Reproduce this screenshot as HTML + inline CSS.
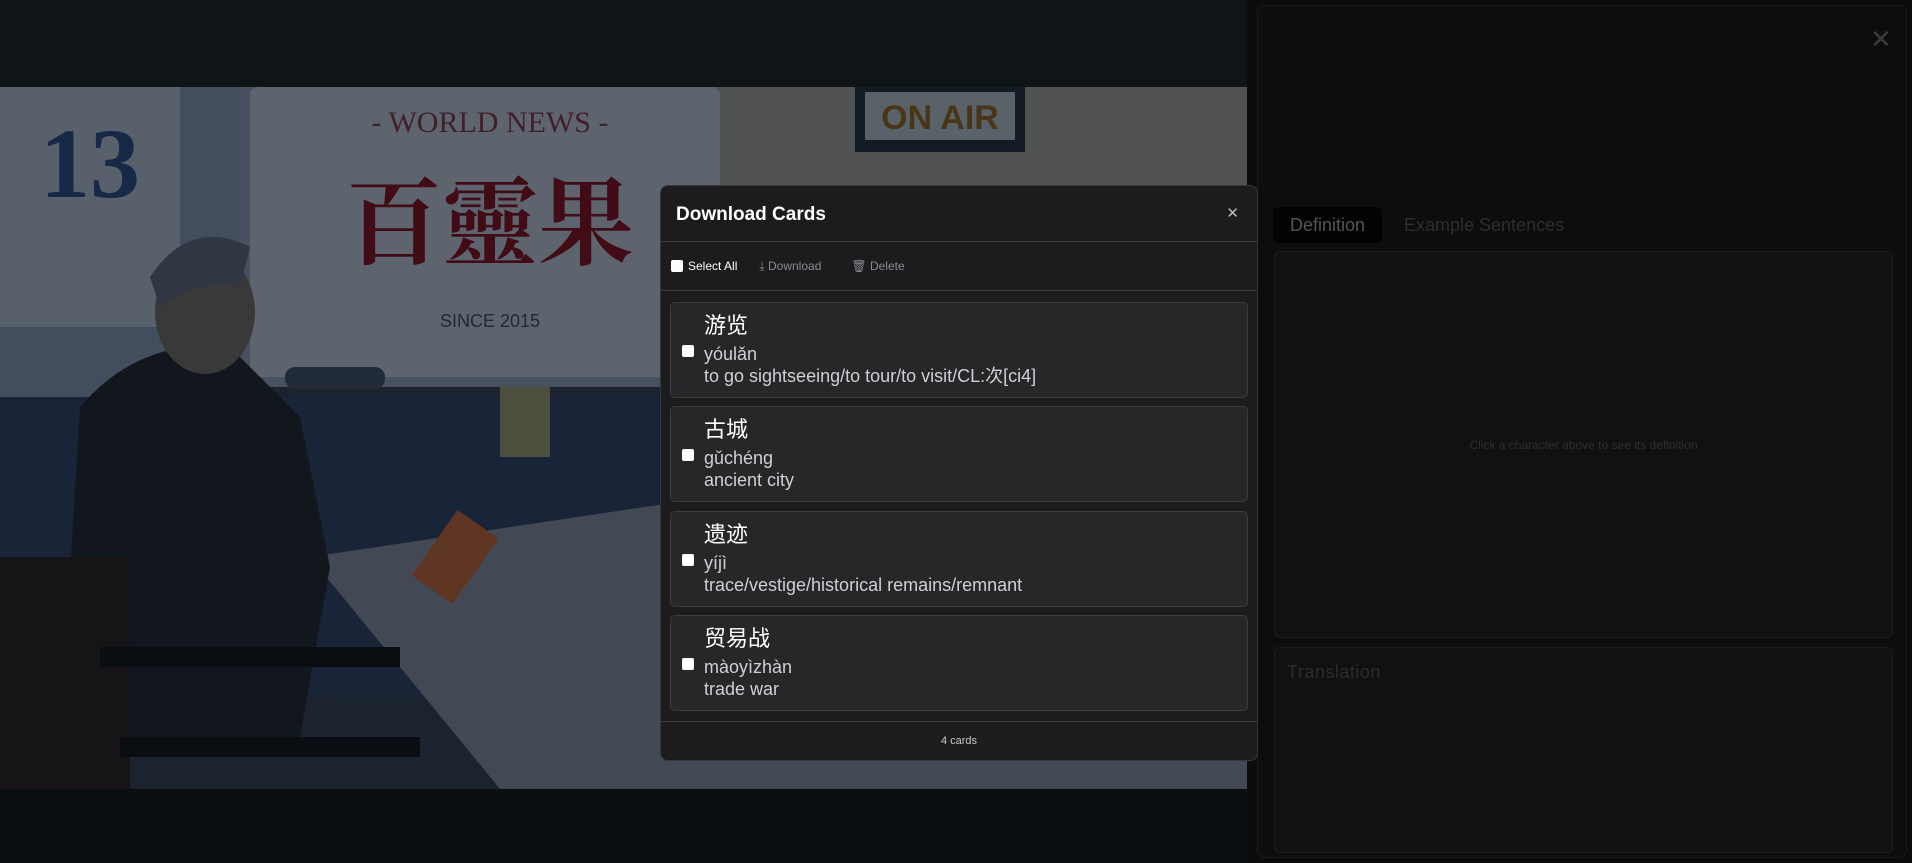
<!DOCTYPE html>
<html><head><meta charset="utf-8"><style>
*{box-sizing:border-box;margin:0;padding:0}
body{width:1912px;height:863px;background:#0b0c0d;font-family:"Liberation Sans","Noto Sans CJK SC",sans-serif;position:relative;overflow:hidden}
.top{position:absolute;left:0;top:0;width:1247px;height:87px;background:#0f1416}
.bot{position:absolute;left:0;top:789px;width:1247px;height:74px;background:#0b0f11}
.video{position:absolute;left:0;top:87px;width:1247px;height:702px;overflow:hidden}
.dim{position:absolute;left:0;top:87px;width:1247px;height:702px;background:rgba(8,12,18,.5)}
.panel{position:absolute;left:1257px;top:5px;width:650px;height:853px;background:#0d0d0e;border:1px solid #1b1b1d;border-radius:8px}
.px{position:absolute;left:1870px;top:24px;color:#3b3b3f;font-size:26px}
.tab1{position:absolute;left:1273px;top:207px;width:109px;height:36px;background:#030303;border-radius:5px;color:#55555a;font-size:18px;line-height:36px;text-align:center}
.tab2{position:absolute;left:1404px;top:207px;height:36px;line-height:36px;color:#2e2e32;font-size:18px}
.box{position:absolute;left:1274px;width:619px;background:#111112;border:1px solid #1c1c1e;border-radius:6px}
.modal{position:absolute;left:660px;top:185px;width:598px;height:576px;background:#1c1c1f;border:1px solid #37373a;border-radius:8px;color:#fff}
.hd{height:56px;border-bottom:1px solid #3a3a3d;position:relative}
.hd h2{position:absolute;left:15px;top:18px;font-size:19px;font-weight:bold}
.hd .x{position:absolute;right:18px;top:18px;font-size:15px;color:#bbb}
.tb{height:49px;border-bottom:1px solid #3a3a3d;display:flex;align-items:center;font-size:12px;padding-left:10px}
.cb{width:12px;height:12px;background:#fff;border-radius:2px;display:inline-block}
.card{position:absolute;left:9px;width:578px;height:96px;background:#27272a;border:1px solid #3c3c40;border-radius:5px}
.card .cb{position:absolute;left:11px;top:42px}
.card .t{position:absolute;left:33px;top:8px;line-height:22px}
.h{font-size:22px;line-height:30px;color:#fff;margin-bottom:2px}
.p,.d{font-size:18px;color:#d0d0d4}
.ft{position:absolute;left:0;right:0;top:535px;border-top:1px solid #3a3a3d;text-align:center;font-size:11px;color:#ccc;padding-top:13px}
</style></head><body>
<div class="top"></div>
<div class="video">
<svg width="1247" height="702" viewBox="0 0 1247 702">
<rect width="1247" height="702" fill="#2e3a4c"/>
<rect x="0" y="0" width="250" height="500" fill="#7c8fa8"/>
<rect x="240" y="0" width="1007" height="300" fill="#8796ac"/>
<rect x="720" y="0" width="527" height="330" fill="#9a9a92"/>
<rect x="250" y="0" width="470" height="290" fill="#b3bcca" rx="8"/>
<rect x="855" y="0" width="170" height="65" fill="#1e2c36"/>
<rect x="865" y="5" width="150" height="48" fill="#a9b8bf"/>
<text x="940" y="42" font-size="34" font-weight="bold" fill="#8a6020" text-anchor="middle" font-family="Liberation Sans">ON AIR</text>
<text x="490" y="45" font-size="30" fill="#7a3540" text-anchor="middle" font-family="Liberation Serif">- WORLD NEWS -</text>
<text x="490" y="170" font-size="96" font-weight="bold" fill="#7a0d18" text-anchor="middle" font-family="Noto Serif CJK SC,serif">百靈果</text>
<text x="490" y="240" font-size="18" fill="#3e4656" text-anchor="middle">SINCE 2015</text>
<rect x="0" y="0" width="180" height="240" fill="#a9b4c4"/>
<text x="90" y="110" font-size="100" font-weight="bold" fill="#24467a" text-anchor="middle" font-family="Liberation Serif">13</text>
<rect x="0" y="310" width="720" height="300" fill="#2b3d60"/>
<polygon points="310,470 1247,330 1247,702 500,702" fill="#7c8799"/>
<path d="M60 650 L80 320 Q140 250 230 260 L300 330 L330 480 L300 650 Z" fill="#1d2329"/>
<ellipse cx="205" cy="225" rx="50" ry="62" fill="#6a6660"/>
<path d="M150 190 Q190 130 250 160 L240 200 Q200 190 160 220 Z" fill="#5a6272"/>
<rect x="0" y="470" width="130" height="232" fill="#241c1c"/>
<rect x="100" y="560" width="300" height="20" fill="#0d1013"/>
<rect x="120" y="650" width="300" height="20" fill="#0d1013"/>
<rect x="500" y="300" width="50" height="70" fill="#94916a"/>
<rect x="430" y="430" width="50" height="80" fill="#b56035" transform="rotate(35 455 470)"/>
<rect x="285" y="280" width="100" height="22" fill="#3a4a5e" rx="10"/>
</svg>
</div>
<div class="dim"></div>
<div class="bot"></div>

<div class="panel"></div>
<div class="px">✕</div>
<div class="tab1">Definition</div>
<div class="tab2">Example Sentences</div>
<div class="box" style="top:251px;height:387px"><div style="position:absolute;top:186px;width:100%;text-align:center;font-size:12px;color:#2f2f33">Click a character above to see its definition</div></div>
<div class="box" style="top:647px;height:206px"><div style="position:absolute;left:12px;top:14px;font-size:18px;color:#2c2c30;letter-spacing:.5px">Translation</div></div>

<div class="modal">
<div class="hd"><h2>Download Cards</h2><span class="x">✕</span></div>
<div class="tb"><span class="cb"></span><span style="margin-left:5px">Select All</span>
<span style="margin-left:22px;color:#8a8a90">⤓ Download</span>
<span style="margin-left:30px;color:#8a8a90">🗑 Delete</span></div>
<div class="card" style="top:116px"><span class="cb"></span><div class="t"><div class="h">游览</div><div class="p">yóulǎn</div><div class="d">to go sightseeing/to tour/to visit/CL:次[ci4]</div></div></div>
<div class="card" style="top:220px"><span class="cb"></span><div class="t"><div class="h">古城</div><div class="p">gǔchéng</div><div class="d">ancient city</div></div></div>
<div class="card" style="top:325px"><span class="cb"></span><div class="t"><div class="h">遗迹</div><div class="p">yíjì</div><div class="d">trace/vestige/historical remains/remnant</div></div></div>
<div class="card" style="top:429px"><span class="cb"></span><div class="t"><div class="h">贸易战</div><div class="p">màoyìzhàn</div><div class="d">trade war</div></div></div>
<div class="ft">4 cards</div>
</div>
</body></html>
